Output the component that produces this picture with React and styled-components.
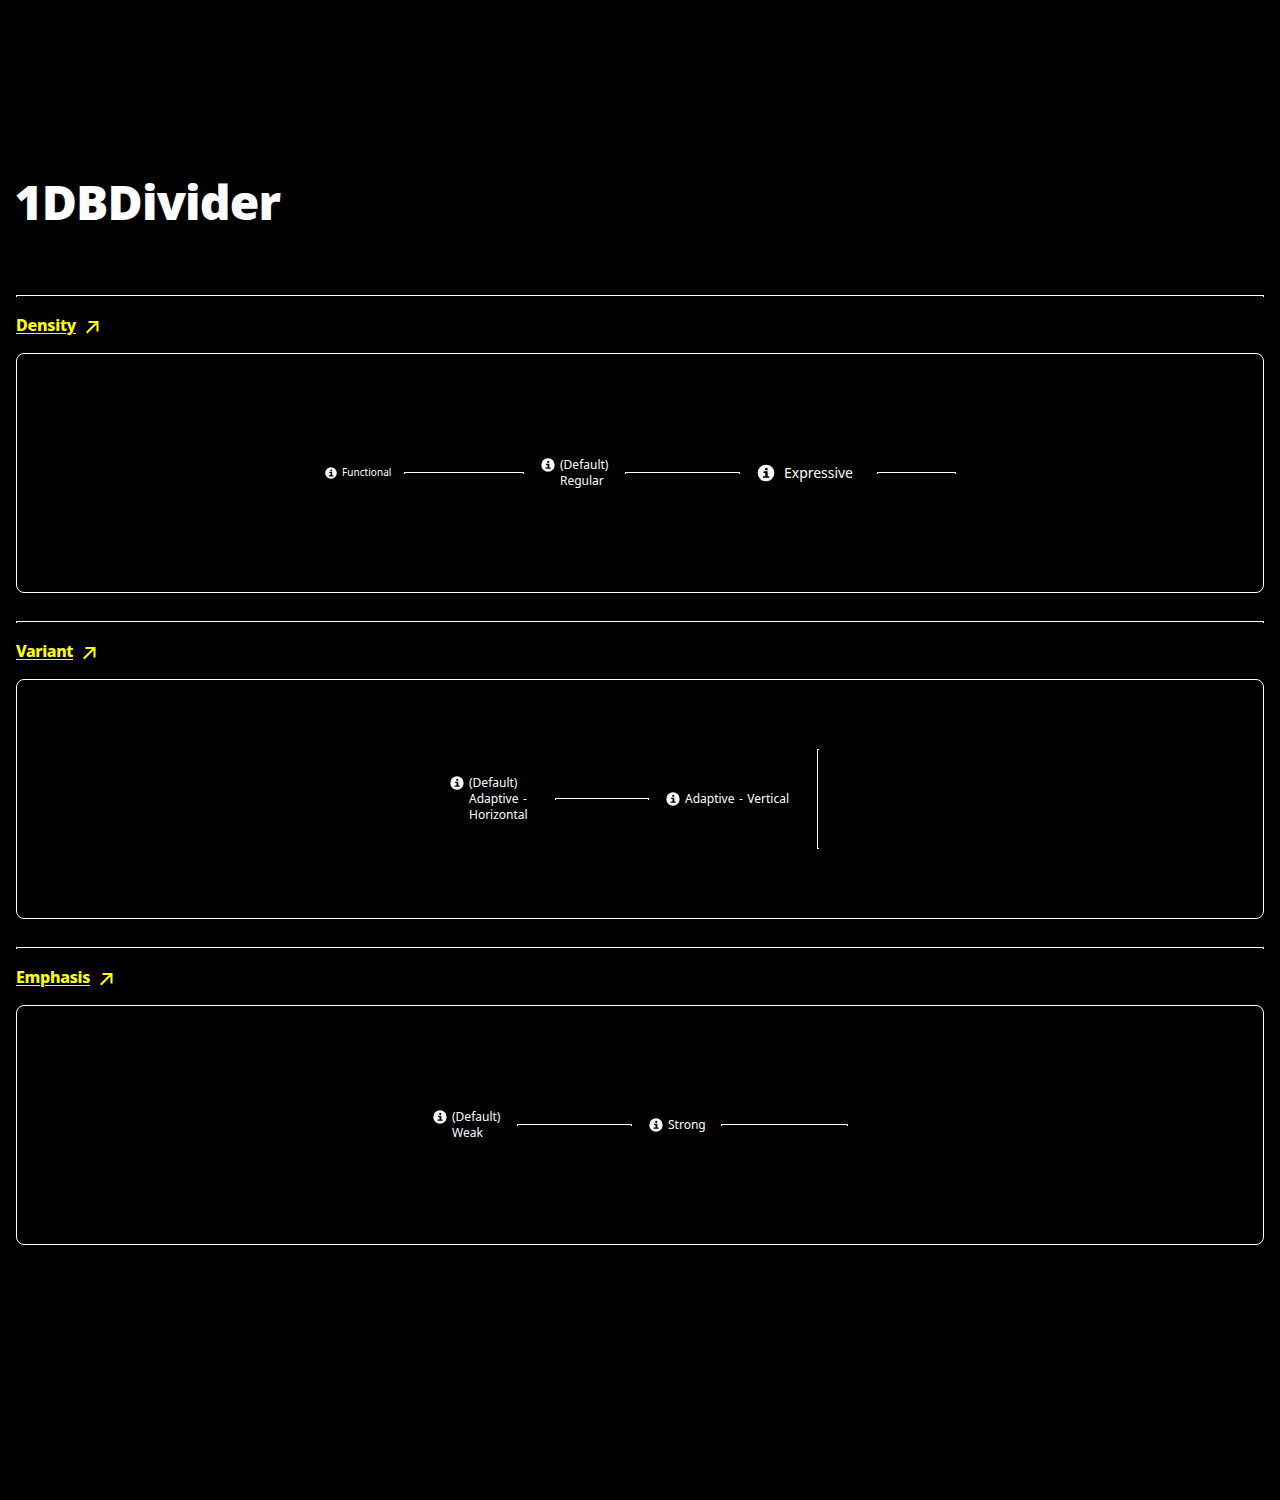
import React from 'react';
import styled, { createGlobalStyle, css } from 'styled-components';

const GlobalStyle = createGlobalStyle`
  *, *::before, *::after { box-sizing: border-box; }
  body {
    margin: 0;
    background: #000;
    color: #fff;
    font-family: "Noto Sans", "Open Sans", sans-serif;
  }
`;

const densities = {
  functional: { font: 10, line: 14, icon: 14, gap: 4, lift: 1, tracking: 0.05 },
  regular: { font: 12, line: 16, icon: 16, gap: 4, lift: 0, tracking: 0 },
  expressive: { font: 14, line: 20, icon: 20, gap: 8, lift: 0, tracking: -0.03 },
};

const Page = styled.main`
  min-height: 1500px;
  padding: 172px 16px 0;
`;

const Title = styled.h1`
  margin: 0 0 63px -1.5px;
  font-size: 48px;
  font-weight: 900;
  line-height: 60px;
  letter-spacing: -0.88px;
`;

const Section = styled.section`
  display: flex;
  flex-direction: column;
  margin-bottom: 28px;
`;

const Divider = styled.div`
  border: 1px solid #fff;
  ${(p) =>
    p.$vertical
      ? css`
          flex: none;
          width: 2px;
          height: 100px;
          border-right: 0;
        `
      : css`
          flex: ${p.$fill ? '1 1 0' : 'none'};
          height: 2px;
          border-bottom: 0;
        `}
`;

const SectionLink = styled.a`
  display: inline-flex;
  align-items: center;
  align-self: flex-start;
  gap: 9.6px;
  height: 24px;
  margin: 16px 0;
  color: #ff0;
  font-size: 16px;
  font-weight: 800;
  line-height: 24px;
  letter-spacing: ${(p) => p.$tracking}px;
  text-decoration: none;
`;

const LinkText = styled.span`
  text-decoration: underline;
  text-decoration-thickness: 1px;
  text-underline-offset: 2px;
`;

const ArrowIcon = styled.svg`
  flex: none;
  width: 13px;
  height: 13px;
  margin-top: 5px;
  fill: none;
  stroke: currentColor;
  stroke-width: 2.1;
`;

const Panel = styled.div`
  display: flex;
  align-items: center;
  justify-content: center;
  gap: 16px;
  height: 240px;
  border: 1px solid #fff;
  border-radius: 8px;
`;

const Example = styled.div`
  display: flex;
  align-items: center;
  width: ${(p) => p.$width}px;
`;

const Info = styled.div`
  display: flex;
  flex: none;
  gap: ${(p) => densities[p.$density].gap}px;
  width: ${(p) => p.$width}px;
  font-size: ${(p) => densities[p.$density].font}px;
  line-height: ${(p) => densities[p.$density].line}px;
  letter-spacing: ${(p) => densities[p.$density].tracking}px;
  word-spacing: 1.4px;
  white-space: pre-line;
`;

const InfoText = styled.span`
  margin-top: -${(p) => densities[p.$density].lift}px;
`;

const InfoSvg = styled.svg`
  flex: none;
  width: ${(p) => p.$size}px;
  height: ${(p) => p.$size}px;
`;

function InfoIcon({ size }) {
  return (
    <InfoSvg $size={size} viewBox="0 0 24 24">
      <circle cx="12" cy="12" r="10" fill="#fff" />
      <circle cx="12.4" cy="7.4" r="1.6" fill="#000" />
      <path d="M9 10h5v5.8h2v2H8.3v-2h2.9v-3.9H9z" fill="#000" />
    </InfoSvg>
  );
}

const sections = [
  {
    name: 'Density',
    tracking: -0.24,
    examples: [
      { label: 'Functional', density: 'functional', labelWidth: 80 },
      { label: '(Default)\nRegular', labelWidth: 85 },
      { label: 'Expressive', density: 'expressive', labelWidth: 121 },
    ],
  },
  {
    name: 'Variant',
    tracking: -0.41,
    examples: [
      { label: '(Default)\nAdaptive -\nHorizontal', labelWidth: 106 },
      { label: 'Adaptive - Vertical', labelWidth: 152, width: 166, vertical: true },
    ],
  },
  {
    name: 'Emphasis',
    tracking: -0.3,
    examples: [
      { label: '(Default)\nWeak', labelWidth: 85 },
      { label: 'Strong', labelWidth: 73 },
    ],
  },
];

export default function App() {
  return (
    <>
      <GlobalStyle />
      <Page>
        <Title>1DBDivider</Title>
        {sections.map((section) => (
          <Section key={section.name}>
            <Divider />
            <SectionLink href="#" $tracking={section.tracking}>
              <LinkText>{section.name}</LinkText>
              <ArrowIcon viewBox="0 0 13 13">
                <path d="M2.5 1H11.5V10.5M11.5 1L.7 11.8" />
              </ArrowIcon>
            </SectionLink>
            <Panel>
              {section.examples.map(
                ({ label, density = 'regular', labelWidth, width = 200, vertical }) => (
                  <Example key={label} $width={width}>
                    <Info $density={density} $width={labelWidth}>
                      <InfoIcon size={densities[density].icon} />
                      <InfoText $density={density}>{label}</InfoText>
                    </Info>
                    <Divider $vertical={vertical} $fill />
                  </Example>
                ),
              )}
            </Panel>
          </Section>
        ))}
      </Page>
    </>
  );
}
